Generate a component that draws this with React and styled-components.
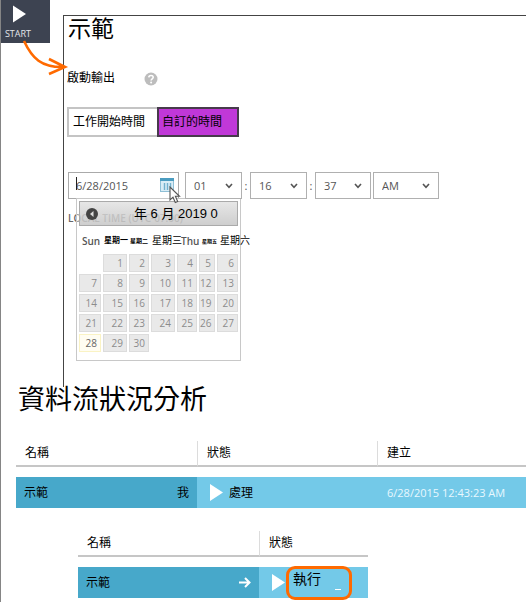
import React from "react";
import styled, { createGlobalStyle } from "styled-components";

const cjk = '"Liberation Sans", "Noto Sans CJK TC", sans-serif';
const latin = '"Open Sans", "Noto Sans CJK TC", sans-serif';

const GlobalStyle = createGlobalStyle`
  * { box-sizing: border-box; }
  body { margin: 0; background: #fff; color: #000; font: 12px/16px ${cjk}; }
  h1, h2, p { margin: 0; font-weight: 400; }
  button, input, select { font: inherit; color: inherit; margin: 0; }
`;

const Page = styled.main`
  position: relative;
  min-height: 100vh;
  padding-bottom: 4px;
  border-left: 1px solid #858585;
  overflow: hidden;
`;

const Top = styled.div`
  display: flex;
  align-items: flex-start;
  gap: 13px;
  margin-left: -1px;
`;

const StartButton = styled.button`
  display: flex;
  flex-direction: column;
  align-items: center;
  gap: 6px;
  flex: none;
  width: 50px;
  height: 43px;
  padding: 5px 14px 0 0;
  border: 0;
  background: #3d4351;
  color: #e4e6ea;
  font: 9px/10px ${latin};
  svg { margin-left: 2px; }
`;

const Arrow = styled.svg`
  position: absolute;
  left: 0;
  top: 36px;
  z-index: 2;
  pointer-events: none;
`;

const Panel = styled.section`
  flex: 1;
  min-width: 0;
  margin-top: 15px;
  padding: 0 3px 161px;
  border-top: 1px solid #444;
  border-left: 1px solid #444;
`;

const PanelTitle = styled.h2`
  font-size: 23px;
  line-height: 26px;
  padding-left: 1px;
`;

const OutputLabel = styled.div`
  display: flex;
  align-items: center;
  gap: 29px;
  margin-top: 28px;
`;

const HelpButton = styled.button`
  display: flex;
  padding: 2px 0 0;
  border: 0;
  background: none;
`;

const Toggle = styled.div`
  display: flex;
  margin-top: 21px;
`;

const ToggleOption = styled.button`
  width: ${(p) => (p.$active ? 82 : 90)}px;
  height: 30px;
  padding: 0 5px;
  text-align: left;
  white-space: nowrap;
  border: 2px solid ${(p) => (p.$active ? "#473a4c" : "#c4c4c4")};
  border-right-width: ${(p) => (p.$active ? 2 : 0)}px;
  background: ${(p) => (p.$active ? "#c038d8" : "#fff")};
  padding-left: ${(p) => (p.$active ? 3 : 4)}px;
`;

const TimeRow = styled.div`
  display: flex;
  align-items: center;
  margin-top: 35px;
  padding-left: 1px;
  color: #555;
  font: 11px/16px ${latin};
`;

const DateField = styled.div`
  position: relative;
  width: 111px;
  margin-right: 6px;
`;

const DateInput = styled.input`
  display: block;
  width: 100%;
  height: 27px;
  padding: 0 24px 0 7px;
  border: 1px solid #aaa;
  background: #fff;
`;

const CalendarIcon = styled.svg`
  position: absolute;
  right: 5px;
  top: 6px;
`;

const Caret = styled.span`
  position: absolute;
  left: 8px;
  top: 5px;
  width: 1px;
  height: 13px;
  background: #222;
`;

const Pointer = styled.svg`
  position: absolute;
  left: 101px;
  top: 14px;
  z-index: 3;
`;

const SelectBox = styled.label`
  display: flex;
  align-items: center;
  position: relative;
  width: ${(p) => p.$width}px;
  select {
    appearance: none;
    width: 100%;
    height: 27px;
    padding: 0 24px 0 8px;
    border: 1px solid #b0b0b0;
    border-radius: 0;
    background: #fff;
  }
  svg { position: absolute; right: 9px; pointer-events: none; }
`;

const Colon = styled.span`
  width: 8px;
  text-align: center;
`;

const Gap = styled.span`
  width: 2px;
`;

const LocalTime = styled.p`
  margin-top: 11px;
  padding-left: 1px;
  color: #666;
  font: 600 10px/16px ${latin};
`;

const Popup = styled.div`
  position: absolute;
  left: 8px;
  top: 26px;
  width: 165px;
  padding-bottom: 6px;
  border: 1px solid #c8c8c8;
  background: rgba(255, 255, 255, 0.4);
`;

const MonthBar = styled.div`
  display: flex;
  align-items: center;
  gap: 36px;
  height: 25px;
  margin: 2px 2px 0;
  padding: 0 6px;
  border: 1px solid #aaa;
  background: linear-gradient(rgba(222, 222, 222, 0.75), rgba(190, 190, 190, 0.75));
  color: #000;
  font: 13px/20px ${cjk};
  white-space: nowrap;
`;

const PrevButton = styled.button`
  display: flex;
  padding: 0;
  border: 0;
  background: none;
`;

const Days = styled.table`
  table-layout: fixed;
  width: 163px;
  margin-top: 2px;
  border-collapse: separate;
  border-spacing: 2px;
  background: #fff;
`;

const Weekday = styled.th`
  height: 22px;
  padding: 0 0 0 ${(p) => p.$pad || 1}px;
  text-align: left;
  white-space: nowrap;
  color: ${(p) => (p.$latin ? "#555" : "#000")};
  font: ${(p) => p.$weight || 400} ${(p) => p.$size}px/12px ${(p) => (p.$latin ? latin : cjk)};
`;

const Day = styled.td`
  height: 18px;
  padding: 0 3px 0 0;
  text-align: right;
  font: 10px/16px ${latin};
  color: ${(p) => (p.$today ? "#666" : "#8c8c8c")};
  border: ${(p) => (p.$empty ? "0" : "1px solid " + (p.$today ? "#faf3c4" : "#dcdcdc"))};
  background: ${(p) => (p.$empty ? "none" : p.$today ? "#fffdf2" : "#e9e9e9")};
`;

const Heading = styled.h1`
  padding-left: 17px;
  font-size: 27px;
  line-height: 26px;
`;

const JobTable = styled.table`
  table-layout: fixed;
  width: ${(p) => (p.$inset ? "290px" : "calc(100% - 15px)")};
  margin: ${(p) => (p.$inset ? "23px 0 0 77px" : "28px 0 0 15px")};
  border-collapse: separate;
  border-spacing: 0;
`;

const HeadCell = styled.th`
  height: 26px;
  padding: 0 9px;
  text-align: left;
  font-weight: 400;
  border-bottom: 2px solid #c6c6c6;
  & + & { border-left: 1px solid #dcdcdc; }
`;

const Cell = styled.td`
  height: 41px;
  padding: 0 8px;
  border-top: 10px solid #fff;
  background: ${(p) => (p.$dark ? "#47a8ca" : "#73c9e8")};
  background-clip: padding-box;
`;

const CellContent = styled.div`
  display: flex;
  align-items: center;
  justify-content: ${(p) => (p.$spread ? "space-between" : "flex-start")};
  gap: ${(p) => p.$gap || 6}px;
  padding-left: ${(p) => (p.$indent ? 5 : 0)}px;
`;

const Created = styled.span`
  padding-left: 2px;
  color: #e8f8ff;
  font: 11px/16px ${latin};
  white-space: nowrap;
`;

const Status = styled.strong`
  position: relative;
  font-size: 14px;
  font-weight: 400;
  line-height: 16px;
  padding: 0 0 8px 7px;
`;

const Ring = styled.span`
  position: absolute;
  left: 0;
  top: -5px;
  width: 66px;
  height: 34px;
  border: 3px solid #ff6a00;
  border-radius: 9px;
`;

const Dash = styled.span`
  position: absolute;
  left: 49px;
  top: 18px;
  width: 6px;
  height: 1px;
  background: #fff;
`;

const Play = ({ width = 13, height = 17 }) => (
  <svg width={width} height={height} viewBox="0 0 13 17" aria-hidden="true">
    <path d="M0 0L13 8.5L0 17Z" fill="#fff" />
  </svg>
);

const TimeSelect = ({ name, value, width }) => (
  <SelectBox $width={width}>
    <select aria-label={name} defaultValue={value}>
      <option>{value}</option>
    </select>
    <svg width="8" height="6" viewBox="0 0 8 6" aria-hidden="true">
      <path d="M1 1L4 4.3L7 1" fill="none" stroke="#555" strokeWidth="1.6" />
    </svg>
  </SelectBox>
);

const weekdays = [
  { text: "Sun", size: 10, latin: true, weight: 600, width: 22, pad: 3 },
  { text: "星期一", size: 8, weight: 700, width: 24 },
  { text: "星期二", size: 6, weight: 700, width: 20 },
  { text: "星期三", size: 10, width: 24 },
  { text: "Thu", size: 10, latin: true, weight: 600, width: 20, pad: 4 },
  { text: "星期五", size: 5, weight: 700, width: 16, pad: 3 },
  { text: "星期六", size: 10, width: 21, pad: 3 },
];

const weeks = [0, 1, 2, 3, 4].map((w) =>
  weekdays.map((_, d) => {
    const n = w * 7 + d;
    return n >= 1 && n <= 30 ? n : null;
  })
);

const Calendar = () => (
  <Popup>
    <MonthBar>
      <PrevButton aria-label="上個月">
        <svg width="12" height="12" viewBox="0 0 12 12">
          <circle cx="6" cy="6" r="6" fill="#444" />
          <path d="M7.5 3L4 6L7.5 9Z" fill="#ddd" />
        </svg>
      </PrevButton>
      <span>年 6 月 2019 0</span>
    </MonthBar>
    <Days>
      <colgroup>
        {weekdays.map((d) => (
          <col key={d.text} width={d.width} />
        ))}
      </colgroup>
      <thead>
        <tr>
          {weekdays.map((d) => (
            <Weekday key={d.text} $size={d.size} $latin={d.latin} $weight={d.weight} $pad={d.pad}>
              {d.text}
            </Weekday>
          ))}
        </tr>
      </thead>
      <tbody>
        {weeks.map((week, w) => (
          <tr key={w}>
            {week.map((day, d) => (
              <Day key={d} $empty={!day} $today={day === 28}>
                {day}
              </Day>
            ))}
          </tr>
        ))}
      </tbody>
    </Days>
  </Popup>
);

export default function App() {
  return (
    <>
      <GlobalStyle />
      <Page>
        <Top>
          <StartButton>
            <Play width={13} height={18} />
            START
          </StartButton>
          <Panel>
            <PanelTitle>示範</PanelTitle>
            <OutputLabel>
              <span>啟動輸出</span>
              <HelpButton aria-label="說明">
                <svg width="14" height="14" viewBox="0 0 14 14">
                  <circle cx="7" cy="7" r="6.5" fill="#bdbdbd" />
                  <path
                    d="M4.8 5.4C4.9 2.8 9.2 2.8 9.2 5.3C9.2 6.8 7.1 6.9 7.1 8.6"
                    fill="none"
                    stroke="#fff"
                    strokeWidth="1.6"
                  />
                  <circle cx="7.1" cy="10.6" r="1" fill="#fff" />
                </svg>
              </HelpButton>
            </OutputLabel>
            <Toggle>
              <ToggleOption>工作開始時間</ToggleOption>
              <ToggleOption $active>自訂的時間</ToggleOption>
            </Toggle>
            <TimeRow>
              <DateField>
                <DateInput aria-label="日期" defaultValue="6/28/2015" />
                <Caret />
                <CalendarIcon width="14" height="14" viewBox="0 0 14 14" aria-hidden="true">
                  <rect x="0.5" y="0.5" width="13" height="13" fill="#d9edf6" stroke="#8fbfd6" />
                  <rect width="14" height="3" fill="#4b9cc0" />
                  <path d="M4.5 5V12M7.5 5V12M10.5 5V12" stroke="#72b0cd" strokeWidth="1.4" />
                </CalendarIcon>
                <Calendar />
                <Pointer width="12" height="18" viewBox="0 0 12 18" aria-hidden="true">
                  <path
                    d="M1 1V14L4 11.2L6.3 16.5L8.7 15.4L6.4 10.3H10.5Z"
                    fill="#fff"
                    stroke="#555"
                    strokeWidth="1.1"
                  />
                </Pointer>
              </DateField>
              <TimeSelect name="時" value="01" width={57} />
              <Colon>:</Colon>
              <TimeSelect name="分" value="16" width={57} />
              <Colon>:</Colon>
              <TimeSelect name="秒" value="37" width={56} />
              <Gap />
              <TimeSelect name="上午或下午" value="AM" width={66} />
            </TimeRow>
            <LocalTime>LOCAL TIME (UTC-07:00)</LocalTime>
          </Panel>
        </Top>
        <Arrow width="70" height="42" viewBox="0 36 70 42" aria-hidden="true">
          <path
            d="M23 41C31 58 40 68 64 67M48 59L64 67L48 74"
            fill="none"
            stroke="#ff6a00"
            strokeWidth="2.6"
          />
        </Arrow>

        <Heading>資料流狀況分析</Heading>
        <JobTable>
          <colgroup>
            <col width="181" />
            <col width="180" />
            <col />
          </colgroup>
          <thead>
            <tr>
              <HeadCell>名稱</HeadCell>
              <HeadCell>狀態</HeadCell>
              <HeadCell>建立</HeadCell>
            </tr>
          </thead>
          <tbody>
            <tr>
              <Cell $dark>
                <CellContent $spread>
                  <span>示範</span>
                  <span>我</span>
                </CellContent>
              </Cell>
              <Cell>
                <CellContent $indent>
                  <Play />
                  <span>處理</span>
                </CellContent>
              </Cell>
              <Cell>
                <Created>6/28/2015 12:43:23 AM</Created>
              </Cell>
            </tr>
          </tbody>
        </JobTable>

        <JobTable $inset>
          <colgroup>
            <col width="181" />
            <col />
          </colgroup>
          <thead>
            <tr>
              <HeadCell>名稱</HeadCell>
              <HeadCell>狀態</HeadCell>
            </tr>
          </thead>
          <tbody>
            <tr>
              <Cell $dark>
                <CellContent $spread>
                  <span>示範</span>
                  <svg width="12" height="11" viewBox="0 0 12 11" aria-hidden="true">
                    <path d="M0 5.5H10M6 1L10.5 5.5L6 10" fill="none" stroke="#fff" strokeWidth="2" />
                  </svg>
                </CellContent>
              </Cell>
              <Cell>
                <CellContent $indent $gap={1}>
                  <Play />
                  <Status>
                    執行
                    <Ring />
                    <Dash />
                  </Status>
                </CellContent>
              </Cell>
            </tr>
          </tbody>
        </JobTable>
      </Page>
    </>
  );
}
